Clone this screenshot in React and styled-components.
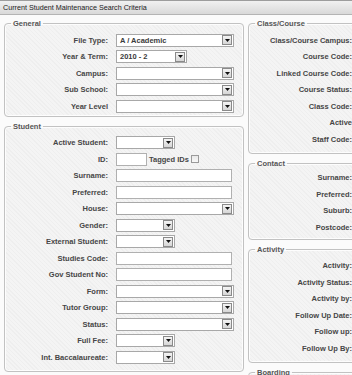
import React from 'react'
import styled, { createGlobalStyle } from 'styled-components'

const GlobalStyle = createGlobalStyle`
  html, body {
    margin: 0;
    padding: 0;
    overflow: hidden;
    background: #fbfbfb;
  }
  body {
    font-family: "Liberation Sans", Arial, sans-serif;
  }
`

const Page = styled.div`
  width: 352px;
  height: 375px;
  overflow: hidden;
`

const TitleBar = styled.div`
  height: 13px;
  line-height: 13px;
  padding-left: 3px;
  font-size: 7.2px;
  color: #222;
  white-space: nowrap;
  background: linear-gradient(#f1f1f1, #d9d9d9);
  border-top: 1px solid #9d9d9d;
  border-bottom: 1px solid #b4b4b4;
`

const Columns = styled.div`
  display: grid;
  grid-template-columns: 240px 220px;
  column-gap: 4px;
  align-items: start;
  padding: 4px 0 0 4px;
`

const Stack = styled.div`
  display: flex;
  flex-direction: column;
  gap: 5px;
`

const Group = styled.fieldset`
  box-sizing: border-box;
  width: 100%;
  min-width: 0;
  min-height: ${p => p.$minH ?? 0}px;
  margin: 0;
  padding: ${p => p.$top ?? 4}px 0 ${p => p.$bottom ?? 5}px 0;
  border: 1px solid #c2c2c2;
  border-radius: 4px;
  box-shadow: inset 0 0 0 1px #fdfdfd;
  background-color: #f4f4f4;
  background-image: repeating-linear-gradient(
    45deg,
    rgba(0, 0, 0, 0.025) 0 1px,
    transparent 1px 3px
  );
`

const Legend = styled.legend`
  margin-left: 6px;
  padding: 0 2px;
  font-size: 7.5px;
  line-height: 9px;
  font-weight: bold;
  color: #555;
`

const Row = styled.div`
  display: grid;
  grid-template-columns: 103px 1fr;
  column-gap: 8px;
  align-items: center;
  height: 16.5px;
`

const Label = styled.span`
  text-align: right;
  white-space: nowrap;
  font-size: 7.5px;
  font-weight: bold;
  color: #464646;
`

const Field = styled.div`
  display: flex;
  align-items: center;
  gap: 2px;
`

const SelectBox = styled.div`
  box-sizing: border-box;
  width: ${p => p.$w}px;
  height: 13px;
  display: flex;
  align-items: center;
  justify-content: space-between;
  padding: 0 1px 0 3px;
  background: #fff;
  border: 1px solid #a8a8a8;
  font-size: 7.5px;
  font-weight: bold;
  color: #3a3a3a;
  white-space: nowrap;
`

const ArrowButton = styled.span`
  box-sizing: border-box;
  width: 10px;
  height: 10px;
  display: flex;
  align-items: center;
  justify-content: center;
  background: linear-gradient(#f4f4f4, #d6d6d6);
  border: 1px solid #8a8a8a;
`

const TextBox = styled.div`
  box-sizing: border-box;
  width: ${p => p.$w}px;
  height: 13px;
  background: #fff;
  border: 1px solid #b0b0b0;
`

const Inline = styled.span`
  font-size: 7.5px;
  font-weight: bold;
  color: #464646;
  white-space: nowrap;
`

const Check = styled.span`
  box-sizing: border-box;
  width: 8px;
  height: 8px;
  background: linear-gradient(#e8e8e8, #f8f8f8);
  border: 1px solid #9a9a9a;
`

const Select = ({ w = 118, value }) => (
  <SelectBox $w={w}>
    <span>{value}</span>
    <ArrowButton>
      <svg width="5" height="3" viewBox="0 0 5 3">
        <path d="M0 0 H5 L2.5 3 Z" fill="#111" />
      </svg>
    </ArrowButton>
  </SelectBox>
)

const general = [
  ['File Type:', <Select value="A / Academic" />],
  ['Year & Term:', <Select w={71} value="2010 - 2" />],
  ['Campus:', <Select />],
  ['Sub School:', <Select />],
  ['Year Level', <Select />]
]

const student = [
  ['Active Student:', <Select w={59} />],
  ['ID:', (
    <>
      <TextBox $w={31} />
      <Inline>Tagged IDs</Inline>
      <Check />
    </>
  )],
  ['Surname:', <TextBox $w={116} />],
  ['Preferred:', <TextBox $w={116} />],
  ['House:', <Select />],
  ['Gender:', <Select w={59} />],
  ['External Student:', <Select w={59} />],
  ['Studies Code:', <TextBox $w={116} />],
  ['Gov Student No:', <TextBox $w={116} />],
  ['Form:', <Select />],
  ['Tutor Group:', <Select />],
  ['Status:', <Select />],
  ['Full Fee:', <Select w={59} />],
  ['Int. Baccalaureate:', <Select w={59} />]
]

const classCourse = [
  'Class/Course Campus:',
  'Course Code:',
  'Linked Course Code:',
  'Course Status:',
  'Class Code:',
  'Active',
  'Staff Code:'
]

const contact = ['Surname:', 'Preferred:', 'Suburb:', 'Postcode:']

const activity = [
  'Activity:',
  'Activity Status:',
  'Activity by:',
  'Follow Up Date:',
  'Follow up:',
  'Follow Up By:'
]

const Rows = ({ items }) =>
  items.map(([label, input]) => (
    <Row key={label}>
      <Label>{label}</Label>
      <Field>{input}</Field>
    </Row>
  ))

const LabelRows = ({ items }) =>
  items.map(label => (
    <Row key={label}>
      <Label>{label}</Label>
      <Field />
    </Row>
  ))

const App = () => (
  <Page>
    <GlobalStyle />
    <TitleBar>Current Student Maintenance Search Criteria</TitleBar>
    <Columns>
      <Stack>
        <Group $bottom={1}>
          <Legend>General</Legend>
          <Rows items={general} />
        </Group>
        <Group>
          <Legend>Student</Legend>
          <Rows items={student} />
        </Group>
      </Stack>
      <Stack>
        <Group>
          <Legend>Class/Course</Legend>
          <LabelRows items={classCourse} />
        </Group>
        <Group $top={2} $bottom={3}>
          <Legend>Contact</Legend>
          <LabelRows items={contact} />
        </Group>
        <Group>
          <Legend>Activity</Legend>
          <LabelRows items={activity} />
        </Group>
        <Group $minH={40}>
          <Legend>Boarding</Legend>
        </Group>
      </Stack>
    </Columns>
  </Page>
)

export default App
